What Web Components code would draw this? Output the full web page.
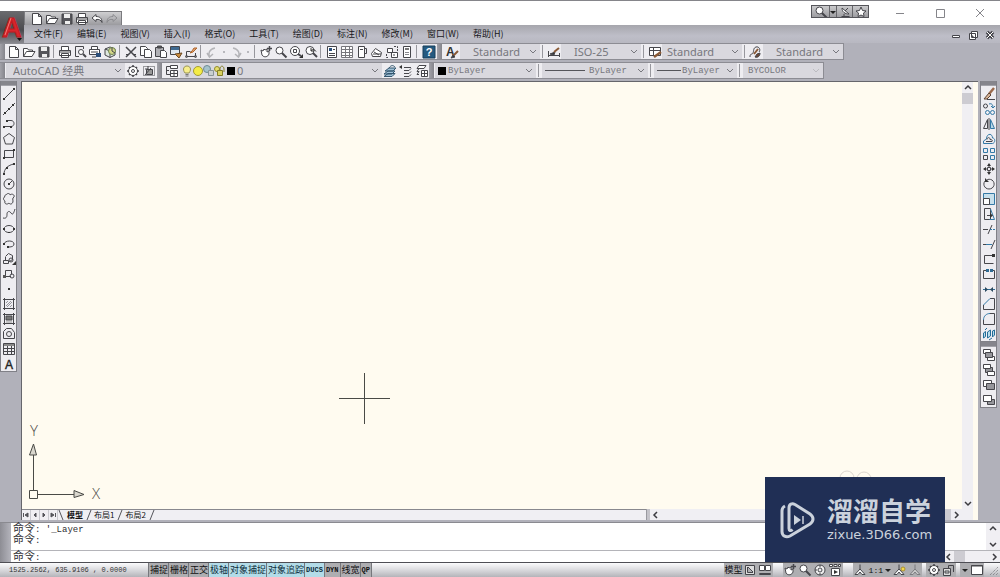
<!DOCTYPE html>
<html lang="zh-CN">
<head>
<meta charset="utf-8">
<title>AutoCAD 经典</title>
<style>
  :root {
    --frame: #b1b1ba;
    --panel: #eeedf1;
    --line: #77777e;
    --ink: #3c3c40;
    --paper: #fffbf0;
    --ui-font: "Noto Sans", "Noto Sans CJK SC", sans-serif;
    --cjk-font: "Noto Sans CJK SC", sans-serif;
    --mixed-font: "Liberation Sans", "Noto Sans CJK SC", sans-serif;
    --mono-font: "Liberation Mono", "Noto Sans CJK SC", monospace;
  }
  body {
    margin: 0;
    background: var(--frame);
    color: #222;
    font-family: var(--cjk-font);
  }
</style>
</head>
<body>
<cad-app>
  <app-header slot="header"></app-header>

  <tool-bar slot="bars">
    <tool-grip></tool-grip>
    <tool-button icon="new" label="新建"></tool-button>
    <tool-button icon="open" label="打开"></tool-button>
    <tool-button icon="save" label="保存"></tool-button>
    <tool-separator></tool-separator>
    <tool-button icon="print" label="打印"></tool-button>
    <tool-button icon="preview" label="打印预览"></tool-button>
    <tool-button icon="publish" label="发布"></tool-button>
    <tool-button icon="dwf" label="三维 DWF"></tool-button>
    <tool-separator></tool-separator>
    <tool-button icon="cut" label="剪切"></tool-button>
    <tool-button icon="copy" label="复制"></tool-button>
    <tool-button icon="paste" label="粘贴"></tool-button>
    <tool-button icon="match" label="特性匹配"></tool-button>
    <tool-button icon="block" label="块编辑器"></tool-button>
    <tool-separator></tool-separator>
    <tool-button icon="undoGray" label="放弃"></tool-button>
    <tool-button icon="dot" label="放弃列表" narrow></tool-button>
    <tool-button icon="redoGray" label="重做"></tool-button>
    <tool-button icon="dot" label="重做列表" narrow></tool-button>
    <tool-separator></tool-separator>
    <tool-button icon="pan" label="实时平移"></tool-button>
    <tool-button icon="zoom" label="实时缩放"></tool-button>
    <tool-button icon="zoomWindow" label="窗口缩放"></tool-button>
    <tool-button icon="zoomBack" label="缩放上一个"></tool-button>
    <tool-separator></tool-separator>
    <tool-button icon="props" label="特性"></tool-button>
    <tool-button icon="gridPanel" label="设计中心"></tool-button>
    <tool-button icon="palette" label="工具选项板"></tool-button>
    <tool-button icon="sheet" label="图纸集"></tool-button>
    <tool-button icon="markup" label="标记集"></tool-button>
    <tool-button icon="calc" label="计算器"></tool-button>
    <tool-separator></tool-separator>
    <tool-button icon="help" label="帮助" wide></tool-button>
    <tool-grip></tool-grip>
    <tool-button icon="textStyle" label="文字样式" wide></tool-button>
    <cad-select label="文字样式" value="Standard" class="style"></cad-select>
    <tool-separator></tool-separator>
    <tool-button icon="dimStyle" label="标注样式"></tool-button>
    <cad-select label="标注样式" value="ISO-25" class="style"></cad-select>
    <tool-separator></tool-separator>
    <tool-button icon="tableStyle" label="表格样式"></tool-button>
    <cad-select label="表格样式" value="Standard" class="style near"></cad-select>
    <tool-separator></tool-separator>
    <tool-button icon="leaderStyle" label="多重引线样式"></tool-button>
    <cad-select label="多重引线样式" value="Standard" class="style"></cad-select>
  </tool-bar>

  <tool-bar slot="bars">
    <tool-grip></tool-grip>
    <cad-select label="工作空间" value="AutoCAD 经典" class="workspace"></cad-select>
    <tool-button icon="gear" label="工作空间设置"></tool-button>
    <tool-button icon="myspace" label="我的工作空间" wide></tool-button>
    <tool-grip></tool-grip>
    <tool-button icon="layers" label="图层特性" wide></tool-button>
    <cad-select label="图层" value="0" class="layer">
      <cad-icon name="bulb"></cad-icon>
      <cad-icon name="sun"></cad-icon>
      <cad-icon name="freeze"></cad-icon>
      <cad-icon name="lock"></cad-icon>
      <cad-icon name="swatch"></cad-icon>
    </cad-select>
    <tool-button icon="layerCurrent" label="置为当前"></tool-button>
    <tool-button icon="layerPrev" label="上一个图层" wide></tool-button>
    <tool-button icon="layerState" label="图层状态"></tool-button>
    <tool-grip></tool-grip>
    <cad-select label="颜色" value="ByLayer" class="mono color">
      <cad-icon name="swatch"></cad-icon>
    </cad-select>
    <tool-separator></tool-separator>
    <cad-select label="线型" value="ByLayer" class="mono linetype">
      <line-sample style="--length: 40px"></line-sample>
    </cad-select>
    <tool-separator></tool-separator>
    <cad-select label="线宽" value="ByLayer" class="mono lineweight">
      <line-sample style="--length: 24px"></line-sample>
    </cad-select>
    <tool-separator></tool-separator>
    <cad-select label="打印样式" value="BYCOLOR" class="mono plot" faded></cad-select>
  </tool-bar>

  <tool-palette slot="left" label="绘图">
    <tool-button icon="line" label="直线"></tool-button>
    <tool-button icon="xline" label="构造线"></tool-button>
    <tool-button icon="pline" label="多段线"></tool-button>
    <tool-button icon="polygon" label="正多边形"></tool-button>
    <tool-button icon="rect" label="矩形"></tool-button>
    <tool-button icon="arc" label="圆弧"></tool-button>
    <tool-button icon="circle" label="圆"></tool-button>
    <tool-button icon="cloud" label="修订云线"></tool-button>
    <tool-button icon="spline" label="样条曲线"></tool-button>
    <tool-button icon="ellipse" label="椭圆"></tool-button>
    <tool-button icon="ellipseArc" label="椭圆弧"></tool-button>
    <tool-button icon="insert" label="插入块"></tool-button>
    <tool-button icon="makeBlock" label="创建块"></tool-button>
    <tool-button icon="point" label="点"></tool-button>
    <tool-button icon="hatch" label="图案填充"></tool-button>
    <tool-button icon="gradient" label="渐变色"></tool-button>
    <tool-button icon="region" label="面域"></tool-button>
    <tool-button icon="table" label="表格"></tool-button>
    <tool-button icon="mtext" label="多行文字"></tool-button>
  </tool-palette>

  <drawing-view slot="view"></drawing-view>

  <tool-palette slot="right" label="修改">
    <tool-button icon="erase" label="删除"></tool-button>
    <tool-button icon="copyObj" label="复制对象"></tool-button>
    <tool-button icon="mirror" label="镜像"></tool-button>
    <tool-button icon="offset" label="偏移"></tool-button>
    <tool-button icon="array" label="阵列"></tool-button>
    <tool-button icon="move" label="移动"></tool-button>
    <tool-button icon="rotate" label="旋转"></tool-button>
    <tool-button icon="scale" label="缩放"></tool-button>
    <tool-button icon="stretch" label="拉伸"></tool-button>
    <tool-button icon="trim" label="修剪"></tool-button>
    <tool-button icon="extend" label="延伸"></tool-button>
    <tool-button icon="breakPoint" label="打断于点"></tool-button>
    <tool-button icon="break" label="打断"></tool-button>
    <tool-button icon="join" label="合并"></tool-button>
    <tool-button icon="chamfer" label="倒角"></tool-button>
    <tool-button icon="fillet" label="圆角"></tool-button>
    <tool-button icon="explode" label="分解"></tool-button>
  </tool-palette>
  <tool-palette slot="right" label="绘图次序">
    <tool-button icon="front" label="前置"></tool-button>
    <tool-button icon="back" label="后置"></tool-button>
    <tool-button icon="above" label="置于对象之上"></tool-button>
    <tool-button icon="under" label="置于对象之下"></tool-button>
  </tool-palette>

  <command-window slot="command"></command-window>
  <status-bar slot="status"></status-bar>
  <site-badge slot="badge"></site-badge>
</cad-app>

<script>
// Every icon is drawn on a 14 x 14 grid with a 1px stroke.
const ICONS = {
  new: '<path d="M2.500 1.500h6l3 3v8h-9zM8.500 1.500v3h3" fill="#fff"/>',
  open: '<path d="M1.500 11.500v-8h4l1 1.500h4v2M1.500 11.500l3-5h8.500l-3 5z" fill="#fff"/>',
  save: '<path d="M2 2h10v10H2z" fill="#55555a"/><path d="M4 2h6v4H4zM5 9h5v3H5z" fill="#eee" stroke="none"/>',
  print: '<path d="M3.500 5.500v-4h7v4M1.500 5.500h11v5h-11zM3.500 8.500h7v4h-7z" fill="#fff"/><path d="M2 7h10"/>',
  undo: '<path d="M6 2.500L2 6l4 3.500v-2c3-.5 5 .5 6 3C12 6 9.500 4.500 6 4.500z" fill="#fff"/>',
  redo: '<g stroke="#8c8c90"><path d="M8 2.500L12 6 8 9.500v-2c-3-.5-5 .5-6 3C2 6 4.500 4.500 8 4.500z"/></g>',
  preview: '<path d="M10.500 4V1.500h-8v10H6"/><circle cx="8" cy="7" r="2.500" fill="#fff"/><path d="M10 9l3 3" stroke-width="2"/>',
  publish: '<path d="M3.500 4.500v-3h6v3M1.500 4.500h10v5h-10zM3 7h7" fill="#fff"/><path d="M4 12h4"/><path d="M8 8h5v4H8z" fill="#2c4f7a" stroke="none"/>',
  dwf: '<path d="M2 4l5-2 5 2v6l-5 2.500L2 10zM2 4l5 2v6.500" fill="#dfe8df"/><circle cx="9" cy="6" r="3.500" fill="#d5d789" stroke="#6f8753"/><path d="M9 6V2.500M9 6l3 2"/>',
  cut: '<path d="M2 2l10 10M12 2L2 12" stroke-width="1.500"/><path d="M2 9.500h3M9 9.500h3"/>',
  copy: '<path d="M1.500 1.500h5l2 2v7h-7z" fill="#fff"/><path d="M5.500 4.500h5l2 2v6h-7z" fill="#fff"/>',
  paste: '<path d="M1.500 2.500h8v9h-8z" fill="#b0b0b5"/><path d="M3.500 1h4v2h-4z" fill="#555"/><path d="M6.500 5.500h4l2 2v5h-6z" fill="#fff"/>',
  match: '<path d="M1.500 1.500h9v8h-9z" fill="#dfe7ef"/><path d="M2 2h8v3H2z" fill="#3f6a91" stroke="none"/><path d="M6 9l4 4 3-5z" fill="#c98a3c" stroke="#6d4a22"/>',
  block: '<path d="M2.500 11.500v-5h4M2.500 11.500h9V8"/><path d="M6 8l3-1 4-4-3 0-2 3z" fill="#e0a072" stroke="#b0672c"/><circle cx="2.500" cy="11.500" r="1"/><circle cx="11.500" cy="11.500" r="1"/>',
  undoGray: '<g stroke="#b4b4b8"><path d="M4.500 12C3 9 4 4 10 3M2 8l2.500 4L8 9" stroke-width="1.500"/></g>',
  redoGray: '<g stroke="#b4b4b8"><path d="M9.500 12C11 9 10 4 4 3M12 8l-2.500 4L6 9" stroke-width="1.500"/></g>',
  dot: '<path d="M6 6h2v2H6z" fill="#b8b8bd" stroke="none"/>',
  pan: '<path d="M2 5l2 1 1-2 1 1 2-1v3l2-1v3c-1 3-5 4-7 1z" fill="#fff"/><path d="M8 3.500h5M10.500 1v5" stroke-width="1.500"/>',
  zoom: '<circle cx="5.500" cy="5.500" r="3.500" fill="#fff"/><path d="M8 8l4.500 4.500" stroke-width="2"/>',
  zoomWindow: '<circle cx="6" cy="6" r="4.500" fill="#fff"/><path d="M4.500 4.500h3v3h-3z"/><path d="M9 9l3 2" stroke-width="2"/><path d="M10 13h4v-4z" fill="#333" stroke="none"/>',
  zoomBack: '<circle cx="6" cy="5.500" r="4" fill="#fff"/><path d="M9 8l4 4" stroke-width="2"/><path d="M12 6.500C11 4.500 9 4 7 5.500M7 3v3h3" stroke="#333"/>',
  props: '<path d="M2.500 1.500h9v11h-9z" fill="#fff"/><path d="M4 3h3v3H4z" fill="#294f7c" stroke="none"/><path d="M8 4.500h2M4 8.500h6M4 10.500h6"/>',
  gridPanel: '<path d="M1.500 1.500h11v11h-11zM5.500 1.500v11M9.500 1.500v11M1.500 4.500h11M1.500 7.500h11M1.500 10.500h11" fill="#fff" stroke="#77777c"/>',
  palette: '<path d="M3.500 1.500h6v11h-6z" fill="#fff"/><path d="M9.500 3.500h2v5h-2M5 4.500h3"/>',
  sheet: '<path d="M1.500 8.500l4-5 6 4-1 4h-8z" fill="#fff"/><path d="M3 9h8M4 7l5 3"/>',
  markup: '<path d="M2.500 3.500h5v4h-5zM6.500 7.500h6v5h-6z" fill="#fff"/><path d="M9 1.500h3.500V6M1.500 9v3.500H4M8 10h3" stroke-dasharray="2 1"/>',
  calc: '<path d="M3.500 1.500h7v11h-7z" fill="#fff"/><path d="M5 3h4v2H5z" fill="#777" stroke="none"/><path d="M5 7.500h4M5 9.500h4" stroke="#88888d"/>',
  help: '<path d="M1 1h12v12H1z" fill="#245a80" stroke="#173f5b"/><text x="7" y="11" text-anchor="middle" font-family="Liberation Sans" font-weight="bold" font-size="11" fill="#fff" stroke="none">?</text>',
  textStyle: '<text x="1" y="11" font-family="Liberation Sans" font-weight="bold" font-size="12" fill="#333" stroke="none">A</text><path d="M8 11l5-5" stroke="#8a5a36" stroke-width="2"/><path d="M6 13l4-1-2-2z" fill="#333"/>',
  dimStyle: '<path d="M1.500 6v6M12.500 8v4M1.500 10.500h11"/><path d="M3 9l5-2-1 3z" fill="#333"/><path d="M7 7l5-4" stroke="#8a5a36" stroke-width="2"/>',
  tableStyle: '<path d="M1.500 2.500h11v8h-11zM1.500 5.500h11M5.500 2.500v8" fill="#fff"/><path d="M6 12l7-5" stroke="#8a5a36" stroke-width="2.500"/>',
  leaderStyle: '<path d="M1 12c0-4 2-2 3-4s0-5 3-6 5 3 3 5"/><path d="M9 4L5 9" stroke="#8a5a36" stroke-width="2"/><path d="M6 12c3 1 5-1 5-4L8 9z" fill="#6d4a36"/>',
  gear: '<circle cx="7" cy="7" r="4.500" fill="#fff"/><circle cx="7" cy="7" r="1.500"/><path d="M7 1v2M7 11v2M1 7h2M11 7h2M3 3l1 1M10 10l1 1M3 11l1-1M10 4l1-1" stroke-width="1.500"/>',
  myspace: '<path d="M1.500 2.500h11v9h-11z" stroke-dasharray="1 1"/><path d="M4.500 5.500h6v5h-6z" fill="#999"/><path d="M3 11l6-7M6 2v3M3 5h3"/>',
  layers: '<path d="M5.500 1.500h7v3h-7zM5.500 6.500h7v6h-7zM9 6.500v6M5.500 9.500h7" fill="#fff"/><path d="M5 2.500H1.500v8H5M1.500 6.500H4"/>',
  bulb: '<path d="M5 9C2 5 4 2 7 2s5 3 2 7z" fill="#f7ee8c" stroke="#999455"/><path d="M5.500 10.500h3M5.500 12h3" stroke="#777"/>',
  sun: '<circle cx="7" cy="7" r="4.500" fill="#f4ec45" stroke="#a29b35"/>',
  freeze: '<circle cx="5" cy="5" r="3.500" fill="#a5c3cc" stroke="#6e8b95"/><path d="M6.500 6.500h5v5h-5z" fill="#c9cfd1" stroke="#8a9498"/>',
  lock: '<circle cx="4" cy="5" r="2.500" fill="#e6df6d" stroke="#918a2c"/><path d="M4.500 6.500h5v5h-5z" fill="#d8d05e" stroke="#847e28"/><path d="M7 6V4c1-3 4-2 4 1v3" stroke="#847e28"/>',
  swatch: '<path d="M3 3h8v8H3z" fill="#000" stroke="none"/>',
  layerCurrent: '<path d="M1 10l4-3h7l-3 3zM1 12.500l4-3h7l-3 3zM2 7l4-3h7l-3 3z" fill="#9fc0d6" stroke="#33566f"/><path d="M6 4c2-3 4-3 6-1" stroke="#33566f"/>',
  layerPrev: '<path d="M5 6.500h5l2-2M5 9.500h5l2-2M5 12.500h5l2-2M5 3.500h7"/><path d="M0 3l3-2v4z" fill="#333" stroke="none"/>',
  layerState: '<path d="M4 1.500h7l-2 3H2zM4 7.500H2l2-3M4 10.500H2l2-3" fill="#fff"/><path d="M6.500 6.500h6v6h-6zM6.500 9.500h6M9.500 6.500v6" fill="#fff"/>',

  line: '<path d="M2 12L12 2"/><path d="M1 11h2v2H1zM11 1h2v2h-2z" fill="#333" stroke="none"/>',
  xline: '<path d="M1 13L13 1"/><path d="M2 10h2v2H2zM6 6h2v2H6zM10 2h2v2h-2z" fill="#333" stroke="none"/>',
  pline: '<path d="M5 3.500h4c4 0 4 6 0 6H2"/><path d="M1 9h2v2H1zM4 3h2v2H4zM8 9h2v2H8z" fill="#333" stroke="none"/>',
  polygon: '<path d="M7 1.500l5.500 4-2 6.500h-7l-2-6.500z"/>',
  rect: '<path d="M2.500 3.500h9v7h-9z"/><path d="M1 10h2v2H1zM11 2h2v2h-2z" fill="#333" stroke="none"/>',
  arc: '<path d="M2 12C2 7 6 3 12 2"/><path d="M1 11h2v2H1zM4 5h2v2H4zM11 1h2v2h-2z" fill="#333" stroke="none"/>',
  circle: '<circle cx="7" cy="7" r="5"/><path d="M7 7l3-3"/><path d="M6 6h2v2H6z" fill="#333" stroke="none"/>',
  cloud: '<path d="M4 3c1-2 4-2 4 0 2-2 5 0 4 2-2 1-1 3-1 4 0 3-3 4-4 2-2 2-5 1-4-2-2-1-2-4 0-4-1-1 0-2 1-2z"/>',
  spline: '<path d="M1 11c4 1 4-2 4-4s2-4 4-1 3-1 4-4"/>',
  ellipse: '<ellipse cx="7" cy="7" rx="5" ry="3.500"/><path d="M1 6h2v2H1zM11 6h2v2h-2zM6 10h2v1H6z" fill="#333" stroke="none"/>',
  ellipseArc: '<path d="M2 7c1-4 10-4 10 0 0 2-2 3-5 3"/><path d="M1 6h2v2H1zM5 9h2v2H5z" fill="#333" stroke="none"/>',
  insert: '<path d="M3.500 4.500l3-3 4 2v4l-3 2M3.500 5v3M1.500 8.500h5v3h-5z"/><circle cx="9" cy="8" r="2"/><path d="M10 13h4V9z" fill="#333" stroke="none"/>',
  makeBlock: '<path d="M3.500 3.500h6v4M3.500 3.500v5M2 9.500h7"/><circle cx="10" cy="9" r="2"/><path d="M1 8h3v3H1z" fill="#555" stroke="none"/>',
  point: '<path d="M6 6h2v2H6z" fill="#333" stroke="none"/>',
  hatch: '<path d="M2.500 1v12M11.500 1v12M1 2.500h12M1 11.500h12"/><path d="M4 9l5-5M5 10l5-5M4 6l2-2M8 10l2-2" stroke="#96969c"/>',
  gradient: '<path d="M2.500 1v12M11.500 1v12M1 2.500h12M1 11.500h12"/><path d="M4 4h6v4H4z" fill="#777"/><path d="M4 10h6" stroke="#999"/>',
  region: '<path d="M1.500 11.500v-7l3-3h5l3 4v6z"/><circle cx="7" cy="7" r="2.500"/>',
  table: '<path d="M1.500 1.500h11v11h-11zM5.500 3v9.500M9.500 3v9.500M1.500 6.500h11M1.500 9.500h11"/><path d="M2 2h10v2H2z" fill="#888" stroke="none"/>',
  mtext: '<text x="7" y="12" text-anchor="middle" font-family="Liberation Sans" font-size="12" fill="#222" stroke="#222" stroke-width=".4">A</text>',

  erase: '<path d="M12 1L7 7" stroke="#9b6a4c" stroke-width="2.500"/><path d="M7 6l2 2-4 4H2z" fill="#d9b598" stroke="#5c4436"/><path d="M5 12.500h8"/>',
  copyObj: '<circle cx="3.500" cy="4" r="2"/><g stroke="#3379a6"><circle cx="5.500" cy="10.500" r="2"/><circle cx="10.500" cy="10.500" r="2"/><path d="M7 2c3-1 4 1 4 4M9 4l2 2 2-2"/></g>',
  mirror: '<path d="M5.500 2.500v9h-4z"/><path d="M8.500 2.500v9h4z" fill="#b9d8e8" stroke="#3379a6"/><path d="M7 1v12"/>',
  offset: '<path d="M1.500 11.500V9l3-2c0-6 6-6 6-1 3 0 3 5 0 5.500z" stroke="#3379a6"/><path d="M4 9.500h6c1-1 0-2-2-2 0-3-3-2-3 0"/>',
  array: '<g stroke="#3379a6"><path d="M1.500 1.500h4v4h-4zM8.500 1.500h4v4h-4zM8.500 8.500h4v4h-4z"/></g><path d="M1.500 8.500h4v4h-4z"/>',
  move: '<path d="M7 2v3M7 9v3M2 7h3M9 7h3M5.500 5.500h3v3h-3z"/><path d="M7 1l2 3H5zM7 13l2-3H5zM1 7l3-2v4zM13 7l-3-2v4z" fill="#333" stroke="none"/>',
  rotate: '<path d="M4 3c-4 3-2 9 3 9s7-6 3-9c-2-1-4-1-5 0"/><path d="M3 1v4h4z" fill="#333" stroke="none"/>',
  scale: '<path d="M1.500 1.500h11v11h-11z" fill="#c8e0ec" stroke="#3379a6"/><path d="M1.500 6.500h6v6h-6z" fill="#fff"/>',
  stretch: '<path d="M2.500 1.500h6v11h-6z"/><path d="M8.500 2l4 10.500h-5" stroke="#3379a6"/><path d="M5 8.500h3"/><path d="M8 6l3 2.500L8 11z" fill="#333" stroke="none"/>',
  trim: '<path d="M1 7.500h5M6 12l4-9"/><path d="M8 7.500h5" stroke="#3379a6" stroke-dasharray="2 1"/>',
  extend: '<path d="M1 7.500h3M9 12l4-9"/><path d="M4 7.500h6" stroke="#3379a6"/>',
  breakPoint: '<path d="M2.500 3.500h8M2.500 3.500v8h9"/><path d="M10 2h3v3h-3z" fill="#333" stroke="none"/>',
  break: '<path d="M4 3.500H1.500v8h11v-8H10"/><path d="M4 2h3v3H4zM8 2h3v3H8z" fill="#2f6b93" stroke="none"/>',
  join: '<path d="M1 7.500h12" stroke="#2f6b93"/><path d="M3 5l3 2.500L3 10zM11 5L8 7.500l3 2.500z" fill="#2b4a5f" stroke="none"/>',
  chamfer: '<path d="M8 1.500h4.500v11h-11V8"/><path d="M1.500 8L8 1.500" stroke="#3379a6"/>',
  fillet: '<path d="M8 1.500h4.500v11h-11V8"/><path d="M1.500 8c0-4 3-6.500 6.500-6.500" stroke="#3379a6"/>',
  explode: '<g stroke="#246e98"><path d="M1.500 6l2-1.500v5l-2 1.500zM5.500 5l3-2v6l-3 2zM10.500 4l2-1v5l-2 2z" fill="#b7dcec"/><path d="M3 3l2-2M7 13l3-2"/></g>',
  front: '<path d="M1.500 1.500h7v4h-7z" fill="#fff"/><path d="M5.500 8.500h7v4h-7z" fill="#fff"/><path d="M3.500 4.500h7v5h-7z" fill="#96969b"/>',
  back: '<path d="M3.500 4.500h7v5h-7z" fill="#96969b"/><path d="M1.500 1.500h7v4h-7zM5.500 8.500h7v4h-7z" fill="#fff"/>',
  above: '<path d="M1.500 2.500h8v6h-8z" fill="#fff"/><path d="M4.500 5.500h8v6h-8z" fill="#96969b"/>',
  under: '<path d="M5.500 6.500h7v5h-7z" fill="#96969b"/><path d="M1.500 2.500h8v6h-8z" fill="#fff"/>',

  satellite: '<path d="M4 3c0 4 3 6 7 6zM7 6l3-3M3.500 11.500h8M6 9v2" fill="#fff"/>',
  star: '<path d="M7 2l1.500 3.500 3.500.5-2.500 2 .5 3.500-3-1.500-3 1.500.5-3.500L2 6l3.500-.5z" fill="#fff"/>',
  down: '<path d="M4 6h6L7 9z" fill="#222" stroke="none"/>',
  modelSpace: '<path d="M2.500 2.500h9v9h-9zM4.500 4v5.500H10M5 4l5 5" fill="#ddd"/>',
  layoutView: '<path d="M1.500 2.500h5v5h-5zM7.500 2.500h5v5h-5zM1.500 10.500h11v1h-11z" fill="#fff"/>',
  wheel: '<circle cx="7" cy="7" r="5" fill="#eee"/><circle cx="7" cy="7" r="2"/><path d="M7 2v2M7 10v2M2 7h2"/>',
  motion: '<path d="M1.500 1.500h3v2h-3zM6 1.500h3v2H6zM10.500 1.500h2v2h-2zM3.500 5.500h8v7h-8z" fill="#fff"/><path d="M6 7l4 2-4 2z" fill="#333" stroke="none"/>',
  person: '<path d="M7 1.500v5M7 6l-5 5.500h3L7 9l2 2.500h3z" fill="#fff"/>',
  personSun: '<path d="M6 1.500v5M6 6l-5 5.500h3L6 9l2 2.500h3z" fill="#fff"/><circle cx="10" cy="6" r="2" fill="#f3d84b" stroke="#aa9030"/>',
  personGray: '<g stroke="#7c7c80"><path d="M7 1.500v5M7 6l-5 5.500h3L7 9l2 2.500h3z" fill="#ccc"/></g>',
  padlock: '<path d="M1.500 5.500h7v7h-7z" fill="#ddd"/><path d="M6.500 5V2.500h5V9M3 8h4v2H3z"/>',
  screen: '<path d="M1.500 2.500h11v9h-11z" fill="#fff"/><path d="M1 3h12"/>'
};

class BaseElement extends HTMLElement {
  connectedCallback() {
    if (this.shadowRoot) return;
    this.attachShadow({ mode: "open" });
    this.shadowRoot.innerHTML = this.render();
  }

  render() {
    return "<slot></slot>";
  }
}

class CadIcon extends BaseElement {
  render() {
    return `
    <style>
      :host { display: block; width: 14px; height: 14px; flex: none; }
      svg { display: block; fill: none; stroke: #46464b; }
    </style>
    <svg width="14" height="14" viewBox="0 0 14 14" aria-hidden="true">${ICONS[this.getAttribute("name")] ?? ""}</svg>
    `;
  }
}

class ToolButton extends BaseElement {
  render() {
    return `
    <style>
      :host { display: block; width: 15px; height: 15px; flex: none; }
      :host([wide]) { width: 17px; }
      :host([narrow]) { width: 9px; }
      button {
        display: flex;
        align-items: center;
        justify-content: center;
        width: 100%;
        height: 100%;
        padding: 0;
        border: 0;
        overflow: hidden;
        background: transparent;
      }
      button:hover { background: #cfe3ef; }
    </style>
    <button type="button" aria-label="${this.getAttribute("label")}">
      <cad-icon name="${this.getAttribute("icon")}"></cad-icon>
    </button>
    `;
  }
}

class ToolSeparator extends BaseElement {
  render() {
    return `
    <style>
      :host {
        display: block;
        width: 1px;
        height: 13px;
        margin: 0 3px 0 2px;
        flex: none;
        background: #97979d;
      }
    </style>`;
  }
}

class ToolGrip extends BaseElement {
  render() {
    return `
    <style>
      :host {
        display: block;
        width: 5px;
        align-self: stretch;
        margin-right: 1px;
        flex: none;
        background: linear-gradient(90deg, #a2a2a9, #85858c);
      }
    </style>`;
  }
}

class ToolBar extends BaseElement {
  render() {
    return `
    <style>
      :host {
        display: flex;
        align-items: center;
        align-self: flex-start;
        box-sizing: border-box;
        height: 17px;
        border: 1px solid #8c8c93;
        border-left: 0;
        background: var(--panel);
      }
    </style>
    <slot></slot>`;
  }
}

class CadSelect extends BaseElement {
  render() {
    return `
    <style>
      :host {
        --indent: 8px;
        display: grid;
        box-sizing: border-box;
        align-self: stretch;
        flex: none;
        width: 80px;
        background: #d9d8de;
        color: #77777d;
        font: 11px var(--ui-font);
      }
      :host(.style) { --indent: 13px; }
      :host(.near) { --indent: 5px; }
      :host(.workspace) { width: 119px; --indent: 7px; }
      :host(.layer) { width: 202px; --indent: 57px; }
      :host(.mono) { font: 9px var(--mono-font); }
      :host(.color) { width: 101px; --indent: 13px; }
      :host(.linetype) { width: 106px; --indent: 47px; }
      :host(.lineweight) { width: 83px; --indent: 28px; }
      :host(.plot) { --indent: 5px; }
      .leading, select, svg { grid-area: 1 / 1; align-self: center; }
      .leading {
        display: flex;
        align-items: center;
        pointer-events: none;
        z-index: 1;
      }
      select {
        appearance: none;
        width: 100%;
        height: 100%;
        margin: 0;
        padding: 0 14px 0 var(--indent);
        border: 0;
        border-radius: 0;
        background: transparent;
        color: inherit;
        font: inherit;
      }
      svg {
        justify-self: end;
        margin-right: 3px;
        fill: none;
        stroke: #77777d;
        pointer-events: none;
      }
      :host([faded]) svg { stroke: #bbbbc0; }
      ::slotted(cad-icon) { margin-right: -3px; }
    </style>
    <select aria-label="${this.getAttribute("label")}">
      <option>${this.getAttribute("value")}</option>
    </select>
    <span class="leading"><slot></slot></span>
    <svg width="8" height="6" viewBox="0 0 8 6"><path d="M1 1l3 3 3-3"/></svg>
    `;
  }
}

class LineSample extends BaseElement {
  render() {
    return `
    <style>
      :host { display: block; width: var(--length); height: 1px; margin-left: 3px; background: #55555a; }
    </style>`;
  }
}

class AppHeader extends BaseElement {
  render() {
    const menus = ["文件(F)", "编辑(E)", "视图(V)", "插入(I)", "格式(O)", "工具(T)",
      "绘图(D)", "标注(N)", "修改(M)", "窗口(W)", "帮助(H)"];
    const quick = [["new", "新建"], ["open", "打开"], ["save", "保存"],
      ["print", "打印"], ["undo", "放弃"], ["redo", "重做"]];
    return `
    <style>
      :host {
        display: grid;
        grid-template: 24px 18px / 24px 1fr;
        border-top: 1px solid #85858a;
        background: #fff;
      }
      .logo {
        grid-area: 1 / 1 / 3 / 2;
        margin-top: 10px;
        padding: 0;
        border: 0;
        background: linear-gradient(#6b6b6e, #4a4a4e 60%, #88888f);
      }
      .logo svg { display: block; }
      .title { display: flex; align-items: flex-end; }
      .quick {
        display: flex;
        box-sizing: border-box;
        height: 14px;
        width: 98px;
        padding: 0 4px;
        overflow: hidden;
        align-items: center;
        border: 1px solid #7a7a7e;
        border-bottom: 0;
        background: linear-gradient(#cfcfd1, #9b9b9f);
      }
      .search {
        display: flex;
        align-self: flex-start;
        margin: 4px 11px 0 auto;
        height: 11px;
        border: 1px solid #55555a;
        background: linear-gradient(#cacacc, #9d9da1);
      }
      .search tool-button { height: 11px; border-left: 1px solid #66666a; }
      .search tool-button:first-child { border-left: 0; }
      .search tool-button[narrow] { width: 6px; }
      .window { display: flex; align-self: center; }
      .window button, .mdi button { padding: 0; border: 0; background: none; }
      .window button { width: 40px; height: 20px; }
      svg { fill: none; stroke: #85858a; }
      .menubar {
        grid-column: 2;
        display: flex;
        align-items: center;
        background: linear-gradient(#a6a6ad, #bebec8 60%, #b8b8c1);
        padding: 0 4px 0 10px;
      }
      nav { display: flex; flex: 1; gap: 14px; }
      a { color: #18181b; font: 9px/14px var(--cjk-font); text-decoration: none; }
      .mdi { display: flex; gap: 4px; }
      .mdi button { width: 13px; height: 12px; }
      .mdi svg { stroke: #44444a; }
    </style>
    <button class="logo" type="button" aria-label="应用程序菜单">
      <svg width="24" height="31" viewBox="0 0 24 31">
        <text x="2" y="25" font-family="Liberation Sans" font-weight="bold" font-size="27" fill="#d8262b" stroke="#c01a20">A</text>
        <path d="M5 23l6-17" stroke="#f47a74"/>
        <path d="M17 26h5l-2.500 3z" fill="#111" stroke="none"/>
      </svg>
    </button>
    <div class="title">
      <div class="quick">
        ${quick.map(([icon, label]) => `<tool-button icon="${icon}" label="${label}"></tool-button>`).join("")}
      </div>
      <div class="search">
        <tool-button icon="zoom" label="搜索" wide></tool-button>
        <tool-button icon="down" label="搜索选项" narrow></tool-button>
        <tool-button icon="satellite" label="通讯中心"></tool-button>
        <tool-button icon="star" label="收藏夹"></tool-button>
      </div>
      <div class="window">
        <button type="button" aria-label="最小化"><svg width="10" height="10"><path d="M1 5.500h8"/></svg></button>
        <button type="button" aria-label="最大化"><svg width="10" height="10"><path d="M1.500 1.500h8v8h-8z"/></svg></button>
        <button type="button" aria-label="关闭"><svg width="10" height="10"><path d="M1 1l8 8M9 1L1 9"/></svg></button>
      </div>
    </div>
    <div class="menubar">
      <nav>${menus.map((text) => `<a href="#">${text}</a>`).join("")}</nav>
      <div class="mdi">
        <button type="button" aria-label="最小化图形"><svg width="10" height="10"><path d="M1.500 5.500h7v2h-7z" fill="#fff"/></svg></button>
        <button type="button" aria-label="还原图形"><svg width="10" height="10"><path d="M3.500 1.500h6v6h-6zM1.500 3.500h6v6h-6z" fill="#fff"/><path d="M4 6h1v1H4z"/></svg></button>
        <button type="button" aria-label="关闭图形"><svg width="10" height="10"><path d="M2 2l6 6M8 2L2 8" stroke-width="3.500"/><path d="M2 2l6 6M8 2L2 8" stroke="#fff"/></svg></button>
      </div>
    </div>
    `;
  }
}

class ToolPalette extends BaseElement {
  render() {
    return `
    <style>
      :host {
        display: block;
        box-sizing: border-box;
        width: 17px;
        border: 1px solid #808087;
        border-top: 0;
        background: var(--panel);
      }
      .grip { height: 4px; background: #85858c; border-bottom: 1px solid #a2a2a9; }
    </style>
    <div role="toolbar" aria-label="${this.getAttribute("label")}">
      <div class="grip"></div>
      <slot></slot>
    </div>
    `;
  }
}

// Arrow, track with thumb, arrow. Runs down unless it has the "row" attribute.
class ScrollTrack extends BaseElement {
  render() {
    const row = this.hasAttribute("row");
    const back = row ? "M5 1L2 4l3 3" : "M1 5l3-3 3 3";
    const forward = row ? "M2 1l3 3-3 3" : "M1 2l3 3 3-3";
    return `
    <style>
      :host {
        display: flex;
        flex-direction: ${row ? "row" : "column"};
        background: #f0eff3;
      }
      button {
        display: flex;
        align-items: center;
        justify-content: center;
        flex: none;
        padding: 0;
        border: 0;
        ${row ? "width: 11px" : "height: 11px"};
        background: transparent;
      }
      .track { display: flex; flex: 1; flex-direction: inherit; justify-content: var(--thumb-at, flex-start); }
      .thumb { flex: none; ${row ? "width" : "height"}: var(--thumb, 11px); background: #cdccd2; }
      svg { fill: none; stroke: #3c3c40; stroke-width: 1.5; }
    </style>
    <button type="button" aria-label="向${row ? "左" : "上"}滚动"><svg width="8" height="8"><path d="${back}"/></svg></button>
    <div class="track"><div class="thumb"></div></div>
    <button type="button" aria-label="向${row ? "右" : "下"}滚动"><svg width="8" height="8"><path d="${forward}"/></svg></button>
    `;
  }
}

class DrawingView extends BaseElement {
  render() {
    return `
    <style>
      :host {
        display: grid;
        grid-template: 1fr 11px / 1fr 11px;
        border: solid #66666c;
        border-width: 1px 0 0 1px;
        background: var(--paper);
        padding-right: 5px;
      }
      .canvas { position: relative; overflow: hidden; }
      .canvas svg { position: absolute; fill: none; stroke: #4a4a46; }
      .ucs { left: 4px; bottom: 6px; }
      .cursor { left: 316px; top: 290px; }
      .hint { right: 88px; bottom: 22px; }
      .canvas .hint { stroke: #ddd6cf; }
      .bottom {
        grid-column: 1 / 3;
        display: flex;
        padding-right: 11px;
        background: #f0eff3;
      }
      .tabs {
        display: flex;
        flex: 2;
        box-sizing: border-box;
        align-items: center;
        border-top: 1px solid #88888e;
      }
      .tabs svg { display: block; fill: #55555a; stroke: #55555a; }
      .step { width: 9px; height: 10px; padding: 0; border: 0; border-right: 1px solid #c9c9cf; background: none; }
      .tab {
        padding: 0 2px;
        border: 0;
        background: none;
        color: #111;
        font: 8px/10px var(--cjk-font);
      }
      .tab.current { font-weight: bold; }
      .split { width: 3px; background: #c4c3c9; border-left: 1px solid #99999f; }
      .bottom scroll-track { flex: 1; }
    </style>
    <div class="canvas">
      <svg class="ucs" width="84" height="88" viewBox="0 -8 84 88">
        <path d="M3.500 67.500h8v8h-8zM7.500 67V32M12 71.500h36"/>
        <path d="M7.500 21l3 11h-7zM58 71.500l-10 3v-7z" fill="#d9d6cd"/>
        <g font-family="Open Sans" font-weight="300" font-size="15" fill="#4a4a46" stroke="none">
          <text x="4" y="13">Y</text>
          <text x="66" y="76">X</text>
        </g>
      </svg>
      <svg class="cursor" width="52" height="52" viewBox="0 0 52 52"><path d="M26.500 1v51M1 26.500h51"/></svg>
      <svg class="hint" width="36" height="18" viewBox="0 0 36 18"><circle cx="9" cy="9" r="7"/><circle cx="26" cy="10" r="7"/></svg>
    </div>
    <scroll-track></scroll-track>
    <div class="bottom">
      <div class="tabs">
        <button class="step" type="button" aria-label="第一个布局"><svg width="8" height="8"><path d="M1.500 2v4M6 2L3 4l3 2z"/></svg></button>
        <button class="step" type="button" aria-label="上一个布局"><svg width="8" height="8"><path d="M5 2L3 4l2 2z"/></svg></button>
        <button class="step" type="button" aria-label="下一个布局"><svg width="8" height="8"><path d="M3 2l2 2-2 2z"/></svg></button>
        <button class="step" type="button" aria-label="最后一个布局"><svg width="8" height="8"><path d="M6.500 2v4M2 2l3 2-3 2z"/></svg></button>
        <svg width="7" height="10"><path d="M1 0l4 10"/></svg>
        <button class="tab current" type="button">模型</button>
        <svg width="7" height="10"><path d="M6 0L2 10"/></svg>
        <button class="tab" type="button">布局1</button>
        <svg width="7" height="10"><path d="M6 0L2 10"/></svg>
        <button class="tab" type="button">布局2</button>
        <svg width="7" height="10"><path d="M6 0L2 10"/></svg>
      </div>
      <div class="split"></div>
      <scroll-track row style="--thumb-at: flex-end"></scroll-track>
    </div>
    `;
  }
}

class CommandWindow extends BaseElement {
  render() {
    return `
    <style>
      :host {
        display: grid;
        grid-template: 27px 12px / 11px 1fr auto;
        border-top: 1px solid #8a8a90;
        background: #fff;
        color: #2e2e32;
        font: 11px/11px var(--mixed-font);
      }
      .grip { grid-row: 1 / 3; background: linear-gradient(90deg, #8d8d94, #b4b4bc); }
      .history { padding: 0 2px; }
      .history div { height: 11px; white-space: pre; }
      code { font: 9px/1px var(--mono-font); }
      .entry {
        grid-column: 2;
        display: flex;
        align-items: center;
        border-top: 1px solid #b4b4b9;
        padding: 0 2px;
      }
      input {
        flex: 1;
        height: 11px;
        min-width: 0;
        padding: 0;
        border: 0;
        outline: 0;
        background: none;
        font: 9px/11px var(--mono-font);
      }
      .down { width: 14px; justify-self: end; --thumb: 0px; }
      .across { width: 57px; grid-column: 3; justify-self: end; border-top: 1px solid #b4b4b9; }
    </style>
    <div class="grip"></div>
    <div class="history">
      <div>命令<code>: '_Layer</code></div>
      <div>命令<code>:</code></div>
    </div>
    <scroll-track class="down"></scroll-track>
    <div class="entry">
      <label for="command">命令<code>:</code></label>
      <input id="command" type="text" autocomplete="off">
    </div>
    <scroll-track class="across" row></scroll-track>
    `;
  }
}

class StatusBar extends BaseElement {
  render() {
    const modes = [["捕捉"], ["栅格"], ["正交"], ["极轴", true], ["对象捕捉", true],
      ["对象追踪", true], ["DUCS", true], ["DYN"], ["线宽"], ["QP"]];
    const tools = (items) => items.map(([icon, label]) =>
      `<tool-button icon="${icon}" label="${label}"></tool-button>`).join("");
    return `
    <style>
      :host {
        display: flex;
        align-items: stretch;
        height: 14px;
        border-top: 1px solid #4e4e54;
        background: linear-gradient(#fbfbfc, #d2d2d6 60%, #b4b4b9);
      }
      output { width: 139px; padding-left: 9px; color: #333; font: 7px/14px var(--mono-font); white-space: pre; }
      .mode, .text {
        padding: 1px 0 0 1px;
        border: 0;
        border-right: 1px solid #77777c;
        background: #aeaeb1;
        color: #111;
        font: 9px/13px var(--mixed-font);
      }
      .mode.latin { padding-right: 1px; font: bold 7px/13px var(--mono-font); }
      .mode.on { background: #b3dce8; color: #0d2c3a; }
      .modes { display: flex; border-left: 1px solid #77777c; }
      .right { display: flex; margin-left: auto; }
      .group { display: flex; align-items: center; margin-right: 10px; background: #aeaeb1; }
      .group.tight { margin-right: 4px; }
      .group .text { align-self: stretch; border: 0; }
      .group .ratio { font: 8px/13px var(--mono-font); }
    </style>
    <output>1525.2562, 635.9106 , 0.0000</output>
    <div class="modes">
      ${modes.map(([text, on]) => `<button type="button" aria-pressed="${Boolean(on)}"
        class="mode ${on ? "on" : ""} ${/[A-Z]/.test(text) ? "latin" : ""}">${text}</button>`).join("")}
    </div>
    <div class="right">
      <div class="group">
        <button class="text" type="button">模型</button>
        ${tools([["modelSpace", "模型空间"], ["layoutView", "快速查看布局"]])}
      </div>
      <div class="group">
        ${tools([["pan", "平移"], ["zoom", "缩放"], ["wheel", "控制盘"], ["motion", "运动录像器"]])}
      </div>
      <div class="group tight">
        ${tools([["person", "注释比例"]])}
        <button class="text ratio" type="button">1:1</button>
        <tool-button icon="down" label="比例列表" narrow></tool-button>
        ${tools([["personSun", "注释可见性"], ["personGray", "自动添加比例"]])}
      </div>
      <div class="group tight">
        ${tools([["gear", "切换工作空间"], ["padlock", "锁定"]])}
      </div>
      <div class="group tight">
        <tool-button icon="down" label="状态栏菜单" narrow></tool-button>
        ${tools([["screen", "全屏显示"]])}
      </div>
      <svg width="12" height="14" fill="none" stroke="#77777c" stroke-dasharray="1 1"><path d="M2 12l8-8M5 12l5-5M8 12l2-2"/></svg>
    </div>
    `;
  }
}

class SiteBadge extends BaseElement {
  render() {
    return `
    <style>
      :host {
        display: flex;
        align-items: center;
        gap: 12px;
        box-sizing: border-box;
        width: 180px;
        height: 85px;
        padding-left: 14px;
        background: #202f55;
        color: #cbd2dc;
      }
      svg { flex: none; fill: none; stroke: currentColor; }
      strong { display: block; font: bold 26px/30px var(--mixed-font); }
      span { display: block; font: 13px/15px "DejaVu Sans", sans-serif; }
    </style>
    <svg width="36" height="38" viewBox="0 0 36 38">
      <path d="M13.500 28.500c-2 2-3.500 1-3.500-1V7c0-4 3-5 6-3.500l15 9.500c4 3 4 7 0 10L11 35c-4 2-8 0-8-4.500V10c0-2 1-4 3-5" stroke-width="3"/>
      <path d="M15 14v10l7-5z" fill="currentColor" stroke="none"/>
      <path d="M24 15v8" stroke-width="1.500"/>
    </svg>
    <div>
      <strong>溜溜自学</strong>
      <span>zixue.3D66.com</span>
    </div>
    `;
  }
}

class CadApp extends BaseElement {
  render() {
    return `
    <style>
      :host {
        display: flex;
        flex-direction: column;
        min-height: 100vh;
        position: relative;
        background: var(--frame);
      }
      .bars { display: flex; flex-direction: column; gap: 2px; padding-bottom: 2px; }
      .work {
        display: grid;
        grid-template-columns: 21px 1fr 22px;
        flex: 1;
        margin-bottom: 2px;
      }
      .right { padding-left: 2px; }
      .badge { position: absolute; right: 55px; bottom: 15px; z-index: 5; }
    </style>
    <slot name="header"></slot>
    <div class="bars"><slot name="bars"></slot></div>
    <div class="work">
      <div class="left"><slot name="left"></slot></div>
      <slot name="view"></slot>
      <div class="right"><slot name="right"></slot></div>
    </div>
    <slot name="command"></slot>
    <slot name="status"></slot>
    <div class="badge"><slot name="badge"></slot></div>
    `;
  }
}

customElements.define("cad-icon", CadIcon);
customElements.define("tool-button", ToolButton);
customElements.define("tool-separator", ToolSeparator);
customElements.define("tool-grip", ToolGrip);
customElements.define("tool-bar", ToolBar);
customElements.define("cad-select", CadSelect);
customElements.define("line-sample", LineSample);
customElements.define("app-header", AppHeader);
customElements.define("tool-palette", ToolPalette);
customElements.define("scroll-track", ScrollTrack);
customElements.define("drawing-view", DrawingView);
customElements.define("command-window", CommandWindow);
customElements.define("status-bar", StatusBar);
customElements.define("site-badge", SiteBadge);
customElements.define("cad-app", CadApp);
</script>
</body>
</html>
